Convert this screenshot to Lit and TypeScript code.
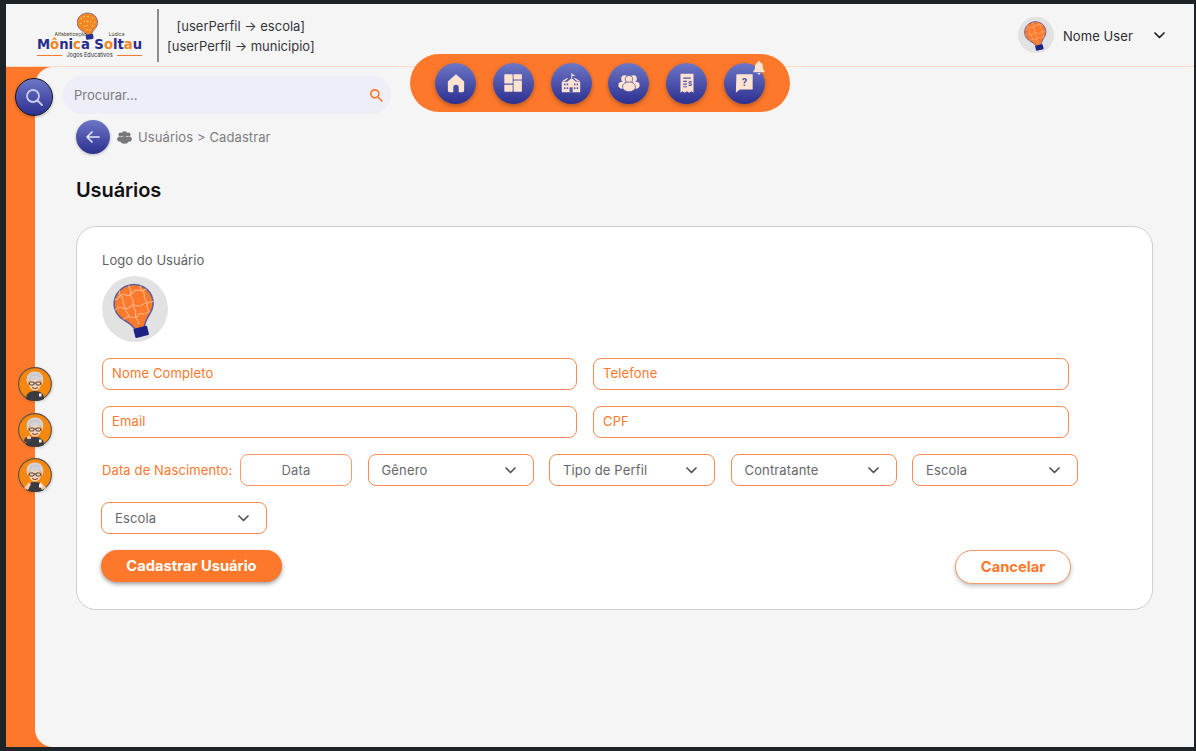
import { LitElement, html, css, svg } from "lit";
import { customElement } from "lit/decorators.js";

const ORANGE_BODY = "M33 8.500C22 8.500 13.500 17 13.500 27.500c0 8 4.500 12 10 17.500 2.500 2.500 3.500 5 5 8h9c1.500-3 2.500-5.500 5-8 5.500-5.500 10-9.500 10-17.500C52.500 17 44 8.500 33 8.500z";

// lightbulb mark used by avatars
const bulb = (size: number) => html`<svg width=${size} height=${size} viewBox="0 0 66 66">
  <defs><clipPath id="bulb-clip"><path d=${ORANGE_BODY}/></clipPath></defs>
  <g transform="rotate(-14 33 33)">
    <path d=${ORANGE_BODY} fill="#fb7a2e" stroke="#5f6198" stroke-width="1.600"/>
    <g clip-path="url(#bulb-clip)" fill="none" stroke="#ffb88f" stroke-width="1">
      <path d="M10 18c4 0 5 2 8 1s2-3 6-3 4 3 8 2 3-3 7-3 4 3 7 2 4-2 9-1"/>
      <path d="M10 29c4 1 5-2 9-1s3 3 6 3 4-3 8-2 3 3 7 2 4-2 8-1 4 0 6-1"/>
      <path d="M18 40c3 1 4-2 7-1s3 3 7 2 3-3 6-2 4 2 9 0"/>
      <path d="M22 8c2 3-2 5 0 8s2 4 1 7 2 5 1 8 2 4 1 8"/>
      <path d="M33 8c-2 3 2 5 0 8s-1 5 0 7-2 5-1 8 2 5 0 8 2 6 1 10"/>
      <path d="M44 8c2 3-2 5 0 8s2 4 1 7 2 5 1 8-2 5 0 8"/>
    </g>
    <rect x="26.500" y="52" width="14" height="9.500" rx="1" fill="#1c2385"/>
  </g>
</svg>`;

// dotted version for the brand mark
const lamp = html`<svg width="24" height="30" viewBox="0 0 24 30">
  <g transform="rotate(-8 11 15)">
    <path d="M11 1C5 1 .8 5 .8 10.500c0 3.500 2 6 4.500 8 1.500 1.200 2.500 2.500 3 4h5.500c.5-1.500 1.500-2.800 3-4 2.500-2 4.500-4.500 4.500-8C21.200 5 17 1 11 1z" fill="#f4871f" stroke="#4a4f9c" stroke-width=".6"/>
    <g fill="#fff3d8">
      <rect x="5" y="5" width="1" height="1"/><rect x="8" y="3.500" width="1" height="1"/><rect x="12" y="4" width="1" height="1"/><rect x="16" y="6" width="1" height="1"/>
      <rect x="4" y="10" width="1" height="1"/><rect x="8" y="8" width="1" height="1"/><rect x="11" y="9" width="1" height="1"/><rect x="14" y="10" width="1" height="1"/>
      <rect x="18" y="11" width="1" height="1"/><rect x="7" y="13" width="1" height="1"/><rect x="10" y="13" width="1" height="1"/><rect x="15" y="14" width="1" height="1"/>
      <rect x="9" y="17" width="1" height="1"/><rect x="12" y="18" width="1" height="1"/>
    </g>
    <rect x="7.500" y="22.500" width="7.500" height="5" rx="1" fill="#2a2f92"/>
  </g>
</svg>`;

const person = (pose: number) => html`<svg width="34" height="34" viewBox="0 0 34 34">
  <circle cx="17" cy="17" r="16.400" fill="#f7880f" stroke="#5d5048" stroke-width="1.100"/>
  <path d="M8 32c0-5 3-8 9-8s9 3 9 8c-3 1.500-6 1.800-9 1.800S11 33.500 8 32z" fill="#3a3a40"/>
  ${pose === 1 ? svg`<path d="M6 28c0-3 3-5 6-5l2 1-1 5H7z" fill="#4a4048"/><rect x="9" y="23" width="4" height="3" rx="1" fill="#f5c9a8"/>` : ""}
  ${pose === 2 ? svg`<path d="M6 30l5-6 2 2-3 6zM28 30l-5-6-2 2 3 6z" fill="#f5c9a8"/>` : ""}
  <rect x="21" y="26.500" width="2.500" height="3" fill="#fff"/>
  <ellipse cx="17" cy="17" rx="6" ry="6.500" fill="#f7d3b6"/>
  <path d="M9.500 18C7 10 10 4.500 17 4.500S27 10 24.500 18c-.5-3-1.500-4.500-3-5.500-3 1-6.500 1-9 0-1.500 1-2.500 2.500-3 5.500z" fill="#d2d2d4"/>
  <path d="M12 9c2-2 3 0 5-1s4 0 5 2M11 12c1-2 2-2 3-2" stroke="#b4b4b8" stroke-width=".6" fill="none"/>
  <g fill="none" stroke="#3a3034" stroke-width=".9">
    <rect x="11.500" y="15" width="4.500" height="3" rx="1"/><rect x="18" y="15" width="4.500" height="3" rx="1"/><path d="M16 16h2"/>
  </g>
  <path d="M14 20.500q3 2.200 6 0" stroke="#7a3a2a" stroke-width="1" fill="none"/>
</svg>`;

const chevron = html`<svg class="chev" width="11" height="7" viewBox="0 0 11 7"><path d="M1 1l4.500 4.500L10 1" fill="none" stroke="currentColor" stroke-width="1.700" stroke-linecap="round" stroke-linejoin="round"/></svg>`;

const navIcons = [
  svg`<path d="M12 4 4.500 10.500V19a1.500 1.500 0 0 0 1.500 1.500h3.500V16a2.500 2.500 0 0 1 5 0v4.500H18a1.500 1.500 0 0 0 1.500-1.500v-8.500z"/>`,
  svg`<rect x="4" y="4" width="7.700" height="8.500" rx=".6"/><rect x="12.500" y="4" width="7.700" height="4.800" rx=".6"/><rect x="12.500" y="9.700" width="7.700" height="10.300" rx=".6"/><rect x="4" y="13.500" width="7.700" height="6.500" rx=".6"/>`,
  svg`<path d="M12.300 3h.8v1l3 .8-3 1v2l3.500 3H20.500v9.700h-17v-9.700h4.900l3.900-3z"/><path d="M3.500 10.300 8 7.500h1.500L6 10.500zM20.500 10.300 16 7.500h-1.500l3.500 3z"/><g fill="#4f55a8"><rect x="10.700" y="16" width="2.800" height="4.700"/><rect x="5.500" y="12.500" width="1.400" height="1.600"/><rect x="8" y="12.500" width="1.400" height="1.600"/><rect x="14.700" y="12.500" width="1.400" height="1.600"/><rect x="17.200" y="12.500" width="1.400" height="1.600"/><rect x="5.500" y="16" width="1.400" height="1.600"/><rect x="8" y="16" width="1.400" height="1.600"/><rect x="14.700" y="16" width="1.400" height="1.600"/><rect x="17.200" y="16" width="1.400" height="1.600"/></g>`,
  svg`<circle cx="8" cy="8" r="3.200"/><circle cx="16" cy="8" r="3.200"/><circle cx="12" cy="8.500" r="3.500" stroke="#4f55a8" stroke-width=".7"/><ellipse cx="5.800" cy="14" rx="3.600" ry="3.200"/><ellipse cx="18.200" cy="14" rx="3.600" ry="3.200"/><ellipse cx="12" cy="15.500" rx="6" ry="4.500" stroke="#4f55a8" stroke-width=".7"/>`,
  svg`<path d="M6 3.500h12V21l-2-1.300-2 1.300-2-1.300-2 1.300-2-1.300L6 21z"/><path d="M8.500 7.500h7M8.500 10.500h3.500M8.500 13h3.500M8.500 15.500h3.500" stroke="#4f55a8" stroke-width="1" fill="none"/><text x="13" y="15" font-size="6" font-family="Inter" font-weight="700" fill="#4f55a8">$</text>`,
  svg`<path d="M5 4h15v14H8l-3.500 3z"/><text x="12.500" y="14.500" text-anchor="middle" font-size="9" font-family="Inter" font-weight="700" fill="#4f55a8">?</text>`,
];

@customElement("app-root")
export class AppRoot extends LitElement {
  static styles = css`
    :host {
      display: block;
      height: 751px;
      box-sizing: border-box;
      padding: 4px 2px 4px 6px;
      background: #1e2327;
      font-family: Inter, "Noto Sans", sans-serif;
      color: #2c2c33;
      overflow: hidden;
    }
    .shell {
      height: 100%;
      display: flex;
      flex-direction: column;
      position: relative;
      background: #fd782b;
    }
    .top {
      height: 62px;
      flex: none;
      display: flex;
      align-items: center;
      background: #f5f5f5;
      border-bottom: 1px solid #ffdcc6;
      padding-left: 31px;
      padding-right: 29px;
    }
    .logo {
      width: 105px;
      height: 49px;
      display: flex;
      flex-direction: column;
      align-items: center;
      margin-top: 2px;
    }
    .logo .lamp {
      width: 24px;
      height: 19px;
      flex: none;
      margin-left: -2px;
    }
    .logo .small {
      width: 70px;
      display: flex;
      justify-content: space-between;
      font-size: 5px;
      color: #4a3a2a;
      line-height: 7px;
    }
    .logo .name {
      font-family: "DejaVu Sans", sans-serif;
      font-weight: 700;
      font-size: 13.200px;
      line-height: 14px;
      color: #272c8c;
      white-space: nowrap;
    }
    .logo .name b {
      color: #f4871f;
    }
    .logo .sub {
      width: 100%;
      display: flex;
      align-items: center;
      gap: 4px;
      font-size: 5.500px;
      line-height: 7px;
      color: #2c2c33;
      justify-content: center;
    }
    .logo .sub i {
      flex: 1;
      height: 1px;
      background: #fd782b;
    }
    .divider {
      width: 2px;
      height: 53px;
      background: #8c8c8c;
      margin-left: 15px;
      margin-right: 8px;
    }
    .perfil {
      font-size: 13px;
      line-height: 20px;
      text-align: center;
      color: #35353b;
      margin-top: 1px;
    }
    .user {
      margin-left: auto;
      display: flex;
      align-items: center;
      font-size: 13px;
      letter-spacing: 0.1px;
    }
    .user span {
      padding-top: 2px;
    }
    .user .pic {
      width: 36px;
      height: 36px;
      border-radius: 50%;
      background: #e2e2e2;
      display: grid;
      place-items: center;
      margin-right: 9px;
    }
    .user .chev {
      margin-left: 21px;
      color: #222;
    }
    .pill {
      position: absolute;
      left: 404px;
      top: 50px;
      width: 380px;
      height: 58px;
      box-sizing: border-box;
      padding-left: 25px;
      border-radius: 29px;
      background: #fd782b;
      display: flex;
      align-items: center;
      gap: 16.800px;
    }
    .round {
      flex: none;
      border-radius: 50%;
      background: linear-gradient(#6d76c6, #2c3090);
      display: grid;
      place-items: center;
    }
    .pill .round {
      width: 41px;
      height: 41px;
      box-shadow: 0 2px 4px rgba(90, 50, 20, 0.45);
    }
    .pill svg {
      fill: #ffe3d1;
    }
    .bell {
      position: absolute;
      left: 343px;
      top: 7px;
    }
    .body {
      flex: 1;
      display: flex;
      min-height: 0;
    }
    .side {
      width: 29px;
      flex: none;
      display: flex;
      flex-direction: column;
      position: relative;
      z-index: 1;
    }
    .side .find {
      width: 38px;
      height: 38px;
      box-sizing: border-box;
      margin: 11px 0 0 9px;
      border: 1px solid #141420;
      box-shadow: 0 1px 3px rgba(0, 0, 0, 0.3);
    }
    .side .people {
      margin: 251px 0 0 12px;
      display: flex;
      flex-direction: column;
      gap: 11.500px;
    }
    .side .people svg {
      display: block;
      filter: drop-shadow(1px 1px 1px rgba(0, 0, 0, 0.15));
    }
    main {
      flex: 1;
      min-width: 0;
      background: #f5f5f5;
      border-radius: 18px 0 0 18px;
      padding: 9px 41px 0 41px;
    }
    .search {
      width: 328px;
      height: 38px;
      box-sizing: border-box;
      margin-left: -13px;
      padding: 0 8px 0 11px;
      border-radius: 19px;
      background: #eeeef8;
      display: flex;
      align-items: center;
      justify-content: space-between;
      font-size: 13px;
      color: #7b7b83;
    }
    .crumb {
      margin-top: 6px;
      display: flex;
      align-items: center;
      font-size: 13px;
      color: #7d7d82;
      letter-spacing: 0.1px;
    }
    .crumb .round {
      width: 34px;
      height: 34px;
      margin-right: 7px;
      box-shadow: 0 1px 3px rgba(0, 0, 0, 0.25);
    }
    .crumb svg.group {
      margin-right: 6px;
    }
    h1 {
      margin: 24px 0 0;
      font-size: 20px;
      line-height: 24px;
      font-weight: 600;
      letter-spacing: -0.1px;
      color: #111;
    }
    .card {
      margin-top: 24px;
      height: 384px;
      box-sizing: border-box;
      background: #fff;
      border: 1px solid #cfcfcf;
      border-radius: 20px;
      padding: 25px 25px 0 25px;
    }
    .logo-label {
      font-size: 13px;
      line-height: 16px;
      color: #5f5f66;
      letter-spacing: 0.05px;
    }
    .logo-pic {
      width: 66px;
      height: 66px;
      border-radius: 50%;
      background: #e2e2e2;
      margin-top: 8px;
    }
    .logo-pic svg {
      display: block;
    }
    .fields {
      margin-top: 16px;
      display: grid;
      grid-template-columns: 475px 476px;
      gap: 16px;
    }
    .field {
      height: 32px;
      box-sizing: border-box;
      border: 1px solid #fb8a4c;
      border-radius: 8px;
      padding: 0 9px 2px;
      display: flex;
      align-items: center;
      font-size: 13px;
      color: #fd782b;
      letter-spacing: 0.15px;
    }
    .row {
      margin-top: 16px;
      display: flex;
      align-items: center;
      height: 32px;
    }
    .row label {
      width: 138px;
      flex: none;
      font-size: 13px;
      letter-spacing: 0.12px;
      color: #fd782b;
      padding-bottom: 1px;
    }
    .date {
      width: 112px;
      height: 32px;
      box-sizing: border-box;
      border: 1px solid #fb9a66;
      border-radius: 8px;
      display: grid;
      place-items: center;
      font-size: 13px;
      color: #6e6e74;
      letter-spacing: 0.15px;
    }
    .sel {
      width: 166px;
      height: 32px;
      flex: none;
      box-sizing: border-box;
      border: 1px solid #fb8a4c;
      border-radius: 8px;
      padding: 0 17px 0 13px;
      margin-left: 15.500px;
      display: flex;
      align-items: center;
      justify-content: space-between;
      font-size: 13px;
      color: #67676d;
      letter-spacing: 0.15px;
    }
    .sel .chev {
      color: #55555b;
    }
    .row.solo .sel {
      margin-left: -1px;
    }
    .actions {
      margin-top: 16px;
      display: flex;
      justify-content: space-between;
      align-items: flex-start;
      width: 969px;
    }
    .primary {
      margin-left: -1px;
      width: 181px;
      height: 32px;
      border-radius: 16px;
      background: #fd782b;
      color: #fff;
      font-size: 14.700px;
      font-weight: 700;
      padding-bottom: 1px;
      box-sizing: border-box;
      display: grid;
      place-items: center;
      box-shadow: 0 2px 4px rgba(0, 0, 0, 0.4);
    }
    .ghost {
      width: 116px;
      height: 34px;
      box-sizing: border-box;
      border-radius: 17px;
      background: #fff;
      border: 1px solid #f09a68;
      color: #fd782b;
      font-size: 14.700px;
      font-weight: 700;
      display: grid;
      place-items: center;
      box-shadow: 0 2px 4px rgba(0, 0, 0, 0.25);
    }
  `;

  render() {
    const sels = ["Gênero", "Tipo de Perfil", "Contratante", "Escola"];
    return html`
      <div class="shell">
        <header class="top">
          <div class="logo">
            <div class="lamp">${lamp}</div>
            <div class="small"><span>Alfabetização</span><span>Lúdica</span></div>
            <div class="name">M<b>ô</b>ni<b>c</b>a S<b>o</b>lt<b>a</b>u</div>
            <div class="sub"><i></i><span>Jogos Educativos</span><i></i></div>
          </div>
          <div class="divider"></div>
          <div class="perfil">[userPerfil → escola]<br />[userPerfil → municipio]</div>
          <div class="user">
            <div class="pic">${bulb(36)}</div>
            <span>Nome User</span>
            ${chevron}
          </div>
        </header>

        <nav class="pill">
          ${navIcons.map(
            (p) => html`<div class="round"><svg width="26" height="26" viewBox="0 0 24 24">${p}</svg></div>`
          )}
          <svg class="bell" width="12" height="14" viewBox="0 0 12 14">
            <path d="M6 0a1 1 0 0 1 1 1.200C9 1.800 10 3.500 10 6c0 2 .6 3.400 1.700 4.500v.8H.3v-.8C1.400 9.400 2 8 2 6c0-2.500 1-4.200 3-4.800A1 1 0 0 1 6 0zM4.500 12h3a1.500 1.500 0 0 1-3 0z" />
          </svg>
        </nav>

        <div class="body">
          <aside class="side">
            <div class="round find">
              <svg width="22" height="22" viewBox="0 0 22 22" fill="none" stroke="#c9cdf0" stroke-width="1.800" stroke-linecap="round"><circle cx="10" cy="10" r="6"/><path d="m14.500 14.500 4.500 4.500"/></svg>
            </div>
            <div class="people">${person(0)}${person(1)}${person(2)}</div>
          </aside>
          <main>
            <div class="search">
              <span>Procurar...</span>
              <svg width="14" height="14" viewBox="0 0 14 14" fill="none" stroke="#fd782b" stroke-width="1.700" stroke-linecap="round"><circle cx="5.800" cy="5.800" r="4"/><path d="m9 9 3.800 3.800"/></svg>
            </div>
            <div class="crumb">
              <div class="round">
                <svg width="16" height="16" viewBox="0 0 16 16" fill="none" stroke="#e4e6fa" stroke-width="1.700" stroke-linecap="round" stroke-linejoin="round"><path d="M14 8H2.500M7 3 2 8l5 5"/></svg>
              </div>
              <svg class="group" width="15" height="13" viewBox="0 0 15 13" fill="#77777c"><circle cx="3.500" cy="3.500" r="2.100"/><circle cx="11.500" cy="3.500" r="2.100"/><circle cx="7.500" cy="3" r="2.800"/><ellipse cx="2.800" cy="8" rx="2.600" ry="2.600"/><ellipse cx="12.200" cy="8" rx="2.600" ry="2.600"/><ellipse cx="7.500" cy="9" rx="4.300" ry="3.800"/></svg>
              <span>Usuários &gt; Cadastrar</span>
            </div>
            <h1>Usuários</h1>
            <section class="card">
              <div class="logo-label">Logo do Usuário</div>
              <div class="logo-pic">${bulb(66)}</div>
              <div class="fields">
                <div class="field">Nome Completo</div>
                <div class="field">Telefone</div>
                <div class="field">Email</div>
                <div class="field">CPF</div>
              </div>
              <div class="row">
                <label>Data de Nascimento:</label>
                <div class="date">Data</div>
                ${sels.map((s) => html`<div class="sel"><span>${s}</span>${chevron}</div>`)}
              </div>
              <div class="row solo">
                <div class="sel"><span>Escola</span>${chevron}</div>
              </div>
              <div class="actions">
                <div class="primary">Cadastrar Usuário</div>
                <div class="ghost">Cancelar</div>
              </div>
            </section>
          </main>
        </div>
      </div>
    `;
  }
}
